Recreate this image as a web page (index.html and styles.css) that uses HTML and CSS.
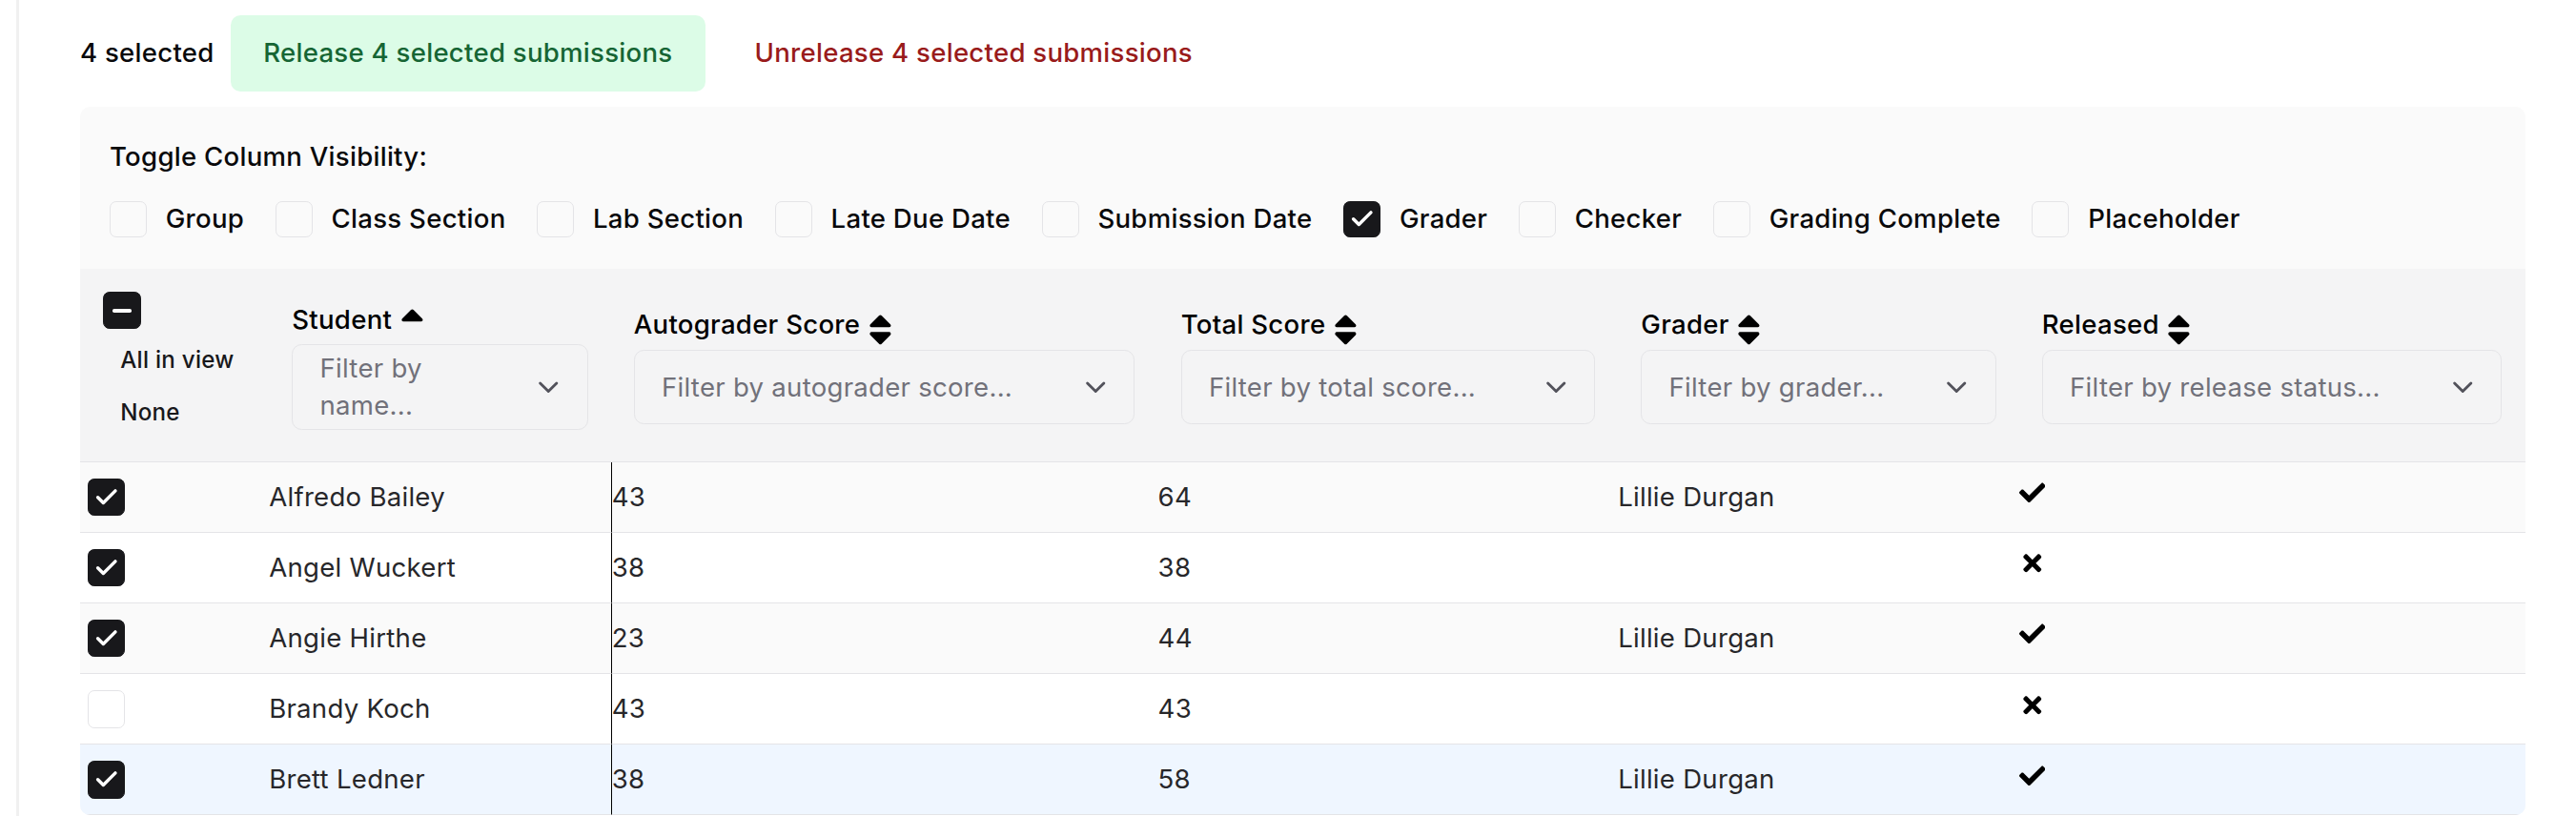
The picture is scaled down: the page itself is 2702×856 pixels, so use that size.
FILE: index.html
```html
<!DOCTYPE html>
<html lang="en">
<head>
<meta charset="utf-8">
<title>Submissions</title>
<link rel="stylesheet" href="styles.css">
</head>
<body>
<div class="page">
  <div class="actions">
    <span class="sel-count">4 selected</span>
    <button class="btn btn-release">Release 4 selected submissions</button>
    <button class="btn btn-unrelease">Unrelease 4 selected submissions</button>
  </div>

  <div class="panel">
    <div class="toggles">
      <div class="toggles-title">Toggle Column Visibility:</div>
      <div class="toggle-list">
        <label class="toggle"><span class="cb cb-sm"></span>Group</label>
        <label class="toggle"><span class="cb cb-sm"></span>Class Section</label>
        <label class="toggle"><span class="cb cb-sm"></span>Lab Section</label>
        <label class="toggle"><span class="cb cb-sm"></span>Late Due Date</label>
        <label class="toggle"><span class="cb cb-sm"></span>Submission Date</label>
        <label class="toggle"><span class="cb cb-sm on"><svg class="cb-ico" viewBox="0 0 24 24"><polyline points="20 6 9 17 4 12"/></svg></span>Grader</label>
        <label class="toggle"><span class="cb cb-sm"></span>Checker</label>
        <label class="toggle"><span class="cb cb-sm"></span>Grading Complete</label>
        <label class="toggle"><span class="cb cb-sm"></span>Placeholder</label>
      </div>
    </div>

    <table class="grid">
      <colgroup>
        <col class="c-sel"><col class="c-student"><col class="c-auto"><col class="c-total"><col class="c-grader"><col class="c-rel">
      </colgroup>
      <thead>
        <tr>
          <th class="th-sel">
            <div class="sel-stack">
              <span class="cb on"><span class="minus"></span></span>
              <button class="link-btn first">All in view</button>
              <button class="link-btn">None</button>
            </div>
          </th>
          <th>
            <div class="th-label">Student<svg class="sort" viewBox="0 0 320 512"><path d="M279 224H41c-21.4 0-32.1-25.9-17-41L143 64c9.4-9.4 24.6-9.4 33.9 0l119 119c15.2 15.1 4.5 41-16.9 41z"/></svg></div>
            <div class="filter"><span class="ph ph-wrap">Filter by name...</span><svg class="chev" viewBox="0 0 24 24"><path d="m6 9 6 6 6-6"/></svg></div>
          </th>
          <th>
            <div class="th-label">Autograder Score<svg class="sort" viewBox="0 0 320 512"><path d="M41 288h238c21.4 0 32.1 25.9 17 41L177 448c-9.4 9.4-24.6 9.4-33.9 0L24 329c-15.1-15.1-4.4-41 17-41zm255-105L177 64c-9.4-9.4-24.6-9.4-33.9 0L24 183c-15.1 15.1-4.4 41 17 41h238c21.4 0 32.1-25.9 17-41z"/></svg></div>
            <div class="filter"><span class="ph">Filter by autograder score...</span><svg class="chev" viewBox="0 0 24 24"><path d="m6 9 6 6 6-6"/></svg></div>
          </th>
          <th>
            <div class="th-label">Total Score<svg class="sort" viewBox="0 0 320 512"><path d="M41 288h238c21.4 0 32.1 25.9 17 41L177 448c-9.4 9.4-24.6 9.4-33.9 0L24 329c-15.1-15.1-4.4-41 17-41zm255-105L177 64c-9.4-9.4-24.6-9.4-33.9 0L24 183c-15.1 15.1-4.4 41 17 41h238c21.4 0 32.1-25.9 17-41z"/></svg></div>
            <div class="filter"><span class="ph">Filter by total score...</span><svg class="chev" viewBox="0 0 24 24"><path d="m6 9 6 6 6-6"/></svg></div>
          </th>
          <th>
            <div class="th-label">Grader<svg class="sort" viewBox="0 0 320 512"><path d="M41 288h238c21.4 0 32.1 25.9 17 41L177 448c-9.4 9.4-24.6 9.4-33.9 0L24 329c-15.1-15.1-4.4-41 17-41zm255-105L177 64c-9.4-9.4-24.6-9.4-33.9 0L24 183c-15.1 15.1-4.4 41 17 41h238c21.4 0 32.1-25.9 17-41z"/></svg></div>
            <div class="filter"><span class="ph">Filter by grader...</span><svg class="chev" viewBox="0 0 24 24"><path d="m6 9 6 6 6-6"/></svg></div>
          </th>
          <th>
            <div class="th-label">Released<svg class="sort" viewBox="0 0 320 512"><path d="M41 288h238c21.4 0 32.1 25.9 17 41L177 448c-9.4 9.4-24.6 9.4-33.9 0L24 329c-15.1-15.1-4.4-41 17-41zm255-105L177 64c-9.4-9.4-24.6-9.4-33.9 0L24 183c-15.1 15.1-4.4 41 17 41h238c21.4 0 32.1-25.9 17-41z"/></svg></div>
            <div class="filter"><span class="ph">Filter by release status...</span><svg class="chev" viewBox="0 0 24 24"><path d="m6 9 6 6 6-6"/></svg></div>
          </th>
        </tr>
      </thead>
      <tbody>
        <tr class="stripe">
          <td class="td-sel"><span class="cb on"><svg class="cb-ico" viewBox="0 0 24 24"><polyline points="20 6 9 17 4 12"/></svg></span></td>
          <td>Alfredo Bailey</td>
          <td class="td-auto">43</td>
          <td>64</td>
          <td>Lillie Durgan</td>
          <td><svg class="ico" viewBox="0 0 512 512"><path d="M173.898 439.404l-166.4-166.4c-9.997-9.997-9.997-26.206 0-36.204l36.203-36.204c9.997-9.998 26.207-9.998 36.204 0L192 312.69 432.095 72.596c9.997-9.997 26.207-9.997 36.204 0l36.203 36.204c9.997 9.997 9.997 26.206 0 36.204l-294.4 294.401c-9.998 9.997-26.207 9.997-36.204-.001z"/></svg></td>
        </tr>
        <tr>
          <td class="td-sel"><span class="cb on"><svg class="cb-ico" viewBox="0 0 24 24"><polyline points="20 6 9 17 4 12"/></svg></span></td>
          <td>Angel Wuckert</td>
          <td class="td-auto">38</td>
          <td>38</td>
          <td></td>
          <td><svg class="ico" viewBox="0 0 352 512"><path d="M242.72 256l100.07-100.07c12.28-12.28 12.28-32.19 0-44.48l-22.24-22.24c-12.28-12.28-32.19-12.28-44.48 0L176 189.28 75.93 89.210c-12.28-12.28-32.19-12.28-44.48 0L9.21 111.45c-12.28 12.28-12.28 32.19 0 44.48L109.28 256 9.21 356.07c-12.28 12.28-12.28 32.19 0 44.48l22.24 22.24c12.28 12.28 32.2 12.28 44.48 0L176 322.72l100.07 100.07c12.28 12.28 32.2 12.28 44.48 0l22.24-22.24c12.28-12.28 12.28-32.19 0-44.48L242.72 256z"/></svg></td>
        </tr>
        <tr class="stripe">
          <td class="td-sel"><span class="cb on"><svg class="cb-ico" viewBox="0 0 24 24"><polyline points="20 6 9 17 4 12"/></svg></span></td>
          <td>Angie Hirthe</td>
          <td class="td-auto">23</td>
          <td>44</td>
          <td>Lillie Durgan</td>
          <td><svg class="ico" viewBox="0 0 512 512"><path d="M173.898 439.404l-166.4-166.4c-9.997-9.997-9.997-26.206 0-36.204l36.203-36.204c9.997-9.998 26.207-9.998 36.204 0L192 312.69 432.095 72.596c9.997-9.997 26.207-9.997 36.204 0l36.203 36.204c9.997 9.997 9.997 26.206 0 36.204l-294.4 294.401c-9.998 9.997-26.207 9.997-36.204-.001z"/></svg></td>
        </tr>
        <tr>
          <td class="td-sel"><span class="cb"></span></td>
          <td>Brandy Koch</td>
          <td class="td-auto">43</td>
          <td>43</td>
          <td></td>
          <td><svg class="ico" viewBox="0 0 352 512"><path d="M242.72 256l100.07-100.07c12.28-12.28 12.28-32.19 0-44.48l-22.24-22.24c-12.28-12.28-32.19-12.28-44.48 0L176 189.28 75.93 89.210c-12.28-12.28-32.19-12.28-44.48 0L9.21 111.45c-12.28 12.28-12.28 32.19 0 44.48L109.28 256 9.21 356.07c-12.28 12.28-12.28 32.19 0 44.48l22.24 22.24c12.28 12.28 32.2 12.28 44.48 0L176 322.72l100.07 100.07c12.28 12.28 32.2 12.28 44.48 0l22.24-22.24c12.28-12.28 12.28-32.19 0-44.48L242.72 256z"/></svg></td>
        </tr>
        <tr class="hover">
          <td class="td-sel"><span class="cb on"><svg class="cb-ico" viewBox="0 0 24 24"><polyline points="20 6 9 17 4 12"/></svg></span></td>
          <td>Brett Ledner</td>
          <td class="td-auto">38</td>
          <td>58</td>
          <td>Lillie Durgan</td>
          <td><svg class="ico" viewBox="0 0 512 512"><path d="M173.898 439.404l-166.4-166.4c-9.997-9.997-9.997-26.206 0-36.204l36.203-36.204c9.997-9.998 26.207-9.998 36.204 0L192 312.69 432.095 72.596c9.997-9.997 26.207-9.997 36.204 0l36.203 36.204c9.997 9.997 9.997 26.206 0 36.204l-294.4 294.401c-9.998 9.997-26.207 9.997-36.204-.001z"/></svg></td>
        </tr>
      </tbody>
    </table>
  </div>
</div>
</body>
</html>
```

FILE: styles.css
```css
html {
  zoom: 1.72321;
}

body {
  margin: 0;
  background: #ffffff;
  font-family: Inter, "Noto Sans", "Liberation Sans", sans-serif;
  font-size: 16px;
  line-height: 24px;
  letter-spacing: 0.16px;
  color: #18181b;
}

.page {
  margin-left: 10px;
  border-left: 2px solid #f0f0f0;
  padding: 9.5px 31px 0 37px;
  min-height: 100vh;
  box-sizing: border-box;
}

/* ---------- action bar ---------- */
.actions {
  display: flex;
  align-items: center;
  gap: 10px;
  height: 46px;
}

.sel-count {
  font-weight: 500;
  color: #09090b;
}

.btn {
  height: 46px;
  padding: 0 20px;
  border: 0;
  border-radius: 6px;
  font-family: inherit;
  font-size: 16px;
  font-weight: 500;
  letter-spacing: inherit;
  line-height: 1;
  background: transparent;
  cursor: pointer;
}

.btn-release {
  background: #dcfce7;
  color: #166534;
}

.btn-unrelease {
  color: #991b1b;
}

/* ---------- panel ---------- */
.panel {
  margin-top: 9.7px;
  background: #fafafa;
  border-radius: 6px;
  overflow: hidden;
}

.toggles {
  display: flex;
  flex-direction: column;
  gap: 14px;
  padding: 18.3px 18px 18px;
}

.toggles-title {
  font-weight: 500;
  color: #09090b;
}

.toggle-list {
  display: flex;
  align-items: center;
  gap: 19px;
  height: 24px;
}

.toggle {
  display: flex;
  align-items: center;
  gap: 11.5px;
  font-weight: 500;
  color: #09090b;
  white-space: nowrap;
}

/* ---------- checkbox ---------- */
.cb {
  display: flex;
  align-items: center;
  justify-content: center;
  width: 23px;
  height: 23px;
  box-sizing: border-box;
  border: 1px solid #e4e4e7;
  border-radius: 4px;
  background: transparent;
  flex: none;
}

.cb-sm {
  width: 22.6px;
  height: 22.6px;
}

.cb.on {
  background: #18181b;
  border-color: #18181b;
}

.cb-ico {
  width: 16px;
  height: 16px;
  fill: none;
  stroke: #ffffff;
  stroke-width: 3;
  stroke-linecap: round;
  stroke-linejoin: round;
}

.minus {
  display: block;
  width: 11.6px;
  height: 2.4px;
  border-radius: 1px;
  background: #ffffff;
}

/* ---------- table ---------- */
.grid {
  width: 100%;
  table-layout: fixed;
  border-collapse: separate;
  border-spacing: 0;
}

.c-sel { width: 115px; }
.c-student { width: 208px; }
.c-auto { width: 333px; }
.c-total { width: 280px; }
.c-grader { width: 244px; }
.c-rel { width: 308px; }

.grid th {
  background: #f4f4f5;
  border-bottom: 1px solid #e4e4e7;
  padding: 14px 14px 14px;
  text-align: left;
  vertical-align: middle;
  font-weight: 400;
}

.sel-stack {
  display: flex;
  flex-direction: column;
  align-items: flex-start;
}

.link-btn {
  height: 32px;
  padding: 0 10.5px;
  border: 0;
  background: transparent;
  font-family: inherit;
  font-size: 14px;
  font-weight: 500;
  letter-spacing: inherit;
  color: #18181b;
  white-space: nowrap;
  cursor: pointer;
}

.link-btn.first {
  margin-top: 2.4px;
}

.th-label {
  display: flex;
  align-items: center;
  height: 24px;
  margin-bottom: 3px;
  font-weight: 500;
  color: #000000;
  white-space: nowrap;
}

.sort {
  width: 14.4px;
  height: 23px;
  margin-left: 5px;
  margin-top: 5px;
  fill: #000000;
  flex: none;
}

.filter {
  display: flex;
  align-items: center;
  gap: 8px;
  min-height: 45.5px;
  box-sizing: border-box;
  padding: 3px 13.3px 3px 16.4px;
  border: 1px solid #e4e4e7;
  border-radius: 6px;
}

.ph {
  flex: 1;
  min-width: 0;
  color: #71717a;
  line-height: 22.4px;
}

.ph-wrap {
  max-width: 105px;
}

.chev {
  width: 20px;
  height: 20px;
  flex: none;
  margin-left: auto;
  fill: none;
  stroke: #52525b;
  stroke-width: 2;
  stroke-linecap: round;
  stroke-linejoin: round;
}

.grid tbody tr {
  height: 43px;
}

.grid td {
  padding: 0;
  border-bottom: 1px solid #e4e4e7;
  vertical-align: middle;
  color: #27272a;
  background: #ffffff;
  white-space: nowrap;
}

.grid tr.stripe td {
  background: #fafafa;
}

.grid tr.hover td {
  background: #eff6ff;
}

.grid td.td-sel {
  padding-left: 4.4px;
}

.grid td.td-auto {
  border-left: 1px solid #000000;
}

.ico {
  width: 16px;
  height: 16px;
  fill: #000000;
}
```
